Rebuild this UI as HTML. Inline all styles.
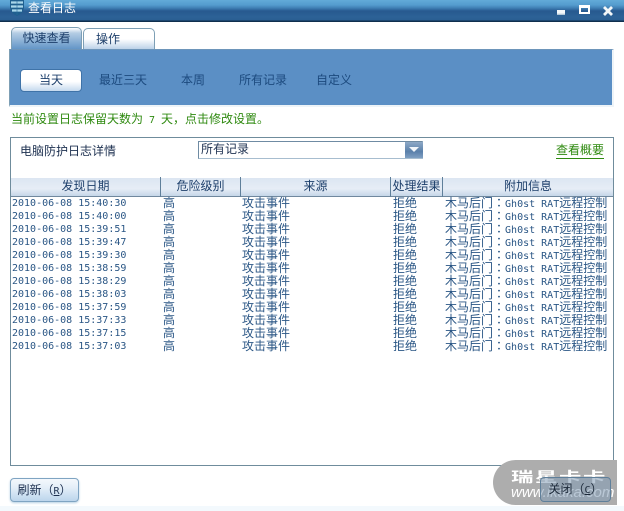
<!DOCTYPE html>
<html><head><meta charset="utf-8">
<style>
html,body{margin:0;padding:0}
body{width:624px;height:511px;overflow:hidden;background:#fff;position:relative;font-family:"Liberation Sans","WenQuanYi Zen Hei","Noto Sans CJK SC",sans-serif;font-size:12px;color:#1d3f6b}
.a{position:absolute;white-space:nowrap;line-height:14px}
.tb{position:absolute;left:0;top:0;width:624px;height:22px;background:linear-gradient(#62aad8 0,#549cce 5px,#3f7fb4 8px,#27598f 11px,#2c6297 17px,#2a5f92 20px,#0f2f4e 21px)}
.tab{position:absolute;box-sizing:border-box;border:1px solid #7d9fb5;border-bottom:0;border-radius:5px 5px 0 0;text-align:center;line-height:20px}
.row{position:absolute;left:0;height:13px;width:624px}
.row span{position:absolute;top:0;line-height:13px;white-space:nowrap;color:#2a5685}
.row span span{position:static;line-height:0}
.m{font-family:"DejaVu Sans Mono","Liberation Mono",monospace;font-size:10px}
.c{font-family:"Noto Sans CJK TC",sans-serif}
.h{position:absolute;top:178px;height:18px;line-height:17px;text-align:center;color:#1d3f6b}
.sep{position:absolute;top:177px;width:1px;height:20px;background:#5f7f9a}
.btn{position:absolute;box-sizing:border-box;border:1px solid #8fb2cd;border-radius:4px;text-align:center;line-height:22px}
</style></head><body>
<div class="tb"></div>
<svg class="a" style="left:9px;top:0" width="16" height="16" viewBox="0 0 16 16"><path d="M1 0H15V8Q14 13 8 16Q2 13 1 8Z" fill="#1f5f8f"/><path d="M2 2.5H14M2 6.5H14M3 10.5H13" stroke="#a9d6ea" stroke-width="2.2"/><path d="M8 1V15" stroke="#2a6d9c" stroke-width="0.6"/></svg>
<div class="a" style="left:28px;top:1px;color:#fff">查看日志</div>
<div class="a" style="left:557px;top:10px;width:8px;height:5px;background:linear-gradient(#f4f8fb 60%,#9fb8cc)"></div>
<div class="a" style="left:579px;top:5px;width:11px;height:9px;box-sizing:border-box;border:2px solid #fff;border-top-width:3px"></div>
<svg class="a" style="left:603px;top:6px" width="10" height="10" viewBox="0 0 10 10"><path d="M1 1L9 9M9 1L1 9" stroke="#f2f6f8" stroke-width="2.8"/></svg>

<div class="tab" style="left:11px;top:27px;width:71px;height:23px;background:linear-gradient(#fff 0,#b5cde4 5px,#5e92c6 22px);color:#1d3f6b">快速查看</div>
<div class="tab" style="left:83px;top:28px;width:72px;height:21px;background:linear-gradient(#fff 50%,#bcd2e8 100%);text-align:left;padding-left:12px">操作</div>
<div class="a" style="left:9px;top:49px;width:602px;height:55px;background:#5b8fc5;border-top:1px solid #6d95ba;border-left:1px solid #7d9fb5;border-right:2px solid #eef4f8;border-bottom:2px solid #eef4f8"></div>
<div class="a" style="left:20px;top:69px;width:62px;height:23px;box-sizing:border-box;background:linear-gradient(#fff 55%,#c5d9ee);border:1px solid #3f73a8;border-radius:4px;text-align:center;line-height:20px;color:#1d3f6b">当天</div>
<div class="a" style="left:99px;top:73px;color:#1c4a7e">最近三天</div>
<div class="a" style="left:181px;top:73px;color:#1c4a7e">本周</div>
<div class="a" style="left:239px;top:73px;color:#1c4a7e">所有记录</div>
<div class="a" style="left:316px;top:73px;color:#1c4a7e">自定义</div>

<div class="a" style="left:11px;top:112px;color:#2f8a10">当前设置日志保留天数为<span class="m" style="display:inline-block;margin:0 6px;width:6px">7</span>天，点击修改设置。</div>

<div class="a" style="left:10px;top:137px;width:602px;height:327px;border:1px solid #6f8c9c"></div>
<div class="a" style="left:20px;top:144px;color:#1d3050">电脑防护日志详情</div>
<div class="a" style="left:198px;top:141px;width:225px;height:18px;box-sizing:border-box;border:1px solid #a7bdcf;border-left-color:#6f8ba3;border-top-color:#6f8ba3;background:#fff;line-height:15px;padding-left:2px;color:#1d3050">所有记录</div>
<div class="a" style="left:405px;top:142px;width:18px;height:16px;background:linear-gradient(#8ea9c6,#5a80aa 60%,#7f9fc3)"></div>
<svg class="a" style="left:405px;top:142px" width="18" height="16"><path d="M4 5H14L9 10Z" fill="#f2f6fa"/></svg>
<div class="a" style="left:556px;top:144px;color:#2f8a10;border-bottom:1px solid #2f8a10;line-height:13px;padding-bottom:1px">查看概要</div>

<div class="a" style="left:11px;top:178px;width:602px;height:18px;background:linear-gradient(#dce6f2 0,#e6edf6 60%,#c6d6e8 100%);border-bottom:1px solid #70889e"></div>
<div class="h" style="left:11px;width:149px">发现日期</div>
<div class="h" style="left:161px;width:79px">危险级别</div>
<div class="h" style="left:241px;width:149px">来源</div>
<div class="h" style="left:391px;width:51px">处理结果</div>
<div class="h" style="left:443px;width:170px">附加信息</div>
<div class="sep" style="left:160px"></div><div class="sep" style="left:240px"></div><div class="sep" style="left:390px"></div><div class="sep" style="left:442px"></div>

<div class="row" style="top:197px"><span class="m" style="left:12px">2010-06-08 15:40:30</span><span style="left:163px">高</span><span style="left:242px">攻击事件</span><span style="left:393px">拒绝</span><span style="left:445px">木马后门<span class="c">：</span><span class="m">Gh0st RAT</span>远程控制</span></div>
<div class="row" style="top:210px"><span class="m" style="left:12px">2010-06-08 15:40:00</span><span style="left:163px">高</span><span style="left:242px">攻击事件</span><span style="left:393px">拒绝</span><span style="left:445px">木马后门<span class="c">：</span><span class="m">Gh0st RAT</span>远程控制</span></div>
<div class="row" style="top:223px"><span class="m" style="left:12px">2010-06-08 15:39:51</span><span style="left:163px">高</span><span style="left:242px">攻击事件</span><span style="left:393px">拒绝</span><span style="left:445px">木马后门<span class="c">：</span><span class="m">Gh0st RAT</span>远程控制</span></div>
<div class="row" style="top:236px"><span class="m" style="left:12px">2010-06-08 15:39:47</span><span style="left:163px">高</span><span style="left:242px">攻击事件</span><span style="left:393px">拒绝</span><span style="left:445px">木马后门<span class="c">：</span><span class="m">Gh0st RAT</span>远程控制</span></div>
<div class="row" style="top:249px"><span class="m" style="left:12px">2010-06-08 15:39:30</span><span style="left:163px">高</span><span style="left:242px">攻击事件</span><span style="left:393px">拒绝</span><span style="left:445px">木马后门<span class="c">：</span><span class="m">Gh0st RAT</span>远程控制</span></div>
<div class="row" style="top:262px"><span class="m" style="left:12px">2010-06-08 15:38:59</span><span style="left:163px">高</span><span style="left:242px">攻击事件</span><span style="left:393px">拒绝</span><span style="left:445px">木马后门<span class="c">：</span><span class="m">Gh0st RAT</span>远程控制</span></div>
<div class="row" style="top:275px"><span class="m" style="left:12px">2010-06-08 15:38:29</span><span style="left:163px">高</span><span style="left:242px">攻击事件</span><span style="left:393px">拒绝</span><span style="left:445px">木马后门<span class="c">：</span><span class="m">Gh0st RAT</span>远程控制</span></div>
<div class="row" style="top:288px"><span class="m" style="left:12px">2010-06-08 15:38:03</span><span style="left:163px">高</span><span style="left:242px">攻击事件</span><span style="left:393px">拒绝</span><span style="left:445px">木马后门<span class="c">：</span><span class="m">Gh0st RAT</span>远程控制</span></div>
<div class="row" style="top:301px"><span class="m" style="left:12px">2010-06-08 15:37:59</span><span style="left:163px">高</span><span style="left:242px">攻击事件</span><span style="left:393px">拒绝</span><span style="left:445px">木马后门<span class="c">：</span><span class="m">Gh0st RAT</span>远程控制</span></div>
<div class="row" style="top:314px"><span class="m" style="left:12px">2010-06-08 15:37:33</span><span style="left:163px">高</span><span style="left:242px">攻击事件</span><span style="left:393px">拒绝</span><span style="left:445px">木马后门<span class="c">：</span><span class="m">Gh0st RAT</span>远程控制</span></div>
<div class="row" style="top:327px"><span class="m" style="left:12px">2010-06-08 15:37:15</span><span style="left:163px">高</span><span style="left:242px">攻击事件</span><span style="left:393px">拒绝</span><span style="left:445px">木马后门<span class="c">：</span><span class="m">Gh0st RAT</span>远程控制</span></div>
<div class="row" style="top:340px"><span class="m" style="left:12px">2010-06-08 15:37:03</span><span style="left:163px">高</span><span style="left:242px">攻击事件</span><span style="left:393px">拒绝</span><span style="left:445px">木马后门<span class="c">：</span><span class="m">Gh0st RAT</span>远程控制</span></div>

<div class="a" style="left:0;top:506px;width:624px;height:5px;background:#f3f9fd"></div>
<div class="btn" style="left:10px;top:478px;width:69px;height:24px;background:linear-gradient(#f4f8fc,#e3eef8 40%,#bcd5ec);color:#1d3050;box-shadow:0 1px 2px #b5cfe2;border-color:#7fa4c2">刷新（<span class="m" style="text-decoration:underline">R</span>）</div>

<div class="a" style="left:493px;top:460px;width:124px;height:45px;background:#adadad;border-radius:23px 0 0 23px"></div>
<div class="a" style="left:511px;top:470px;color:#fff;font-size:14px;font-weight:bold;line-height:14px;letter-spacing:1px;transform:scaleX(1.6);transform-origin:left center">瑞星卡卡</div>
<div class="a" style="left:511px;top:484px;color:#fff;font-size:15px;font-style:italic;line-height:18px">www.ikaka.com</div>
<div class="btn" style="left:540px;top:477px;width:71px;height:25px;background:rgba(130,155,180,.55);border-color:#5f7f9a;color:#1d2a3a">关闭（<span class="m" style="text-decoration:underline">C</span>）</div>
</body></html>
